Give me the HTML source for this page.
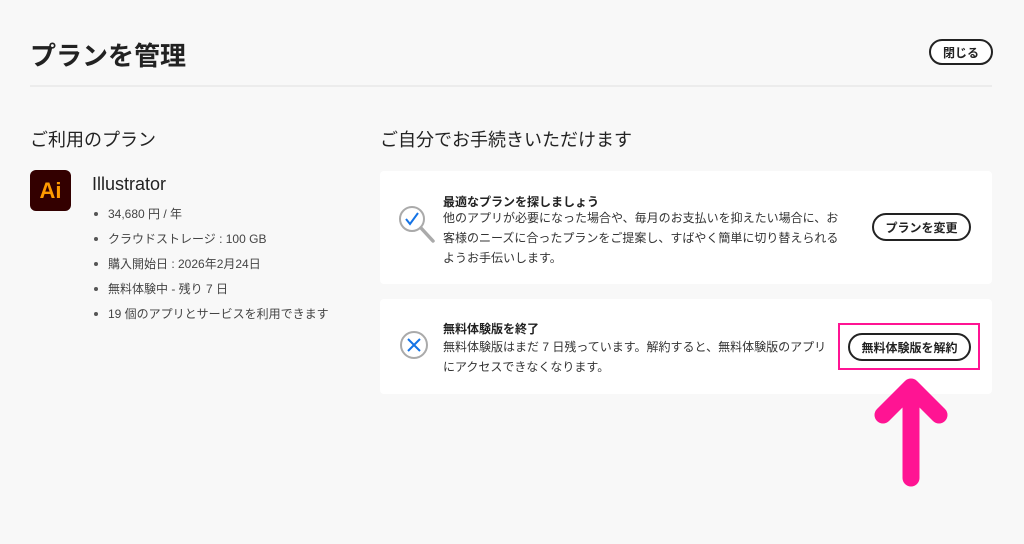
<!DOCTYPE html>
<html><head><meta charset="utf-8"><style>
*{margin:0;padding:0;box-sizing:border-box}
body{width:1024px;height:544px;background:#f8f8f8;font-family:"Liberation Sans","Noto Sans CJK JP",sans-serif;color:#222;position:relative;overflow:hidden}
.a{position:absolute;white-space:nowrap}
h1{position:absolute;left:30px;top:36px;font-size:26px;font-weight:700;color:#222}
.btn{position:absolute;border:2px solid #222;border-radius:16px;background:#fff;font-size:12px;font-weight:700;display:flex;align-items:center;justify-content:center}
.card{position:absolute;left:380px;width:612px;background:#fff;border-radius:4px}
.t{font-size:12px;font-weight:700;color:#222}
.d{font-size:12px;line-height:20px;color:#333}
ul{position:absolute;left:94px;top:205px;list-style:none;font-size:12px;color:#444}
li{height:25px;line-height:18px}
li:before{content:"";display:inline-block;width:4px;height:4px;border-radius:2px;background:#555;margin:0 10px 2px 0;vertical-align:middle}
</style></head><body>
<h1>プランを管理</h1>
<div class="btn" style="left:929px;top:39px;width:64px;height:26px">閉じる</div>
<div class="a" style="left:30px;top:85px;width:962px;height:2px;background:#ececec"></div>
<div class="a" style="left:30px;top:126px;font-size:18px">ご利用のプラン</div>
<div class="a" style="left:380px;top:126px;font-size:18px">ご自分でお手続きいただけます</div>
<div class="a" style="left:30px;top:170px;width:41px;height:41px;background:#330000;border-radius:6px;color:#ff9a00;font-weight:700;font-size:22px;text-align:center;line-height:41px">Ai</div>
<div class="a" style="left:92px;top:174px;font-size:18px;color:#222">Illustrator</div>
<ul><li>34,680 円 / 年</li><li>クラウドストレージ : 100 GB</li><li>購入開始日 : 2026年2月24日</li><li>無料体験中 - 残り 7 日</li><li>19 個のアプリとサービスを利用できます</li></ul>
<div class="card" style="top:171px;height:113px"></div>
<div class="card" style="top:299px;height:95px"></div>
<svg class="a" style="left:397px;top:204px" width="40" height="40" viewBox="0 0 40 40"><circle cx="15" cy="15" r="12" fill="none" stroke="#aaa" stroke-width="2"/><path d="M24 24 L36 37" stroke="#aaa" stroke-width="3.5" stroke-linecap="round"/><path d="M9 15 L13 20 L21 9" fill="none" stroke="#1473e6" stroke-width="2"/></svg>
<svg class="a" style="left:399px;top:330px" width="30" height="30" viewBox="0 0 30 30"><circle cx="15" cy="15" r="13" fill="none" stroke="#aaa" stroke-width="2"/><path d="M9 9 L21 21 M21 9 L9 21" stroke="#1473e6" stroke-width="2"/></svg>
<div class="a t" style="left:443px;top:193px">最適なプランを探しましょう</div>
<div class="a d" style="left:443px;top:208px">他のアプリが必要になった場合や、毎月のお支払いを抑えたい場合に、お<br>客様のニーズに合ったプランをご提案し、すばやく簡単に切り替えられる<br>ようお手伝いします。</div>
<div class="btn" style="left:872px;top:213px;width:99px;height:28px">プランを変更</div>
<div class="a t" style="left:443px;top:320px">無料体験版を終了</div>
<div class="a d" style="left:443px;top:337px">無料体験版はまだ 7 日残っています。解約すると、無料体験版のアプリ<br>にアクセスできなくなります。</div>
<div class="a" style="left:838px;top:323px;width:142px;height:47px;border:2px solid #ff1493"></div>
<div class="btn" style="left:848px;top:333px;width:123px;height:28px">無料体験版を解約</div>
<svg class="a" style="left:860px;top:375px" width="100" height="120"><path d="M51 12 L23 40 M51 12 L79 40 M51 12 L51 103" fill="none" stroke="#ff1493" stroke-width="17" stroke-linecap="round" stroke-linejoin="round"/></svg>
</body></html>
